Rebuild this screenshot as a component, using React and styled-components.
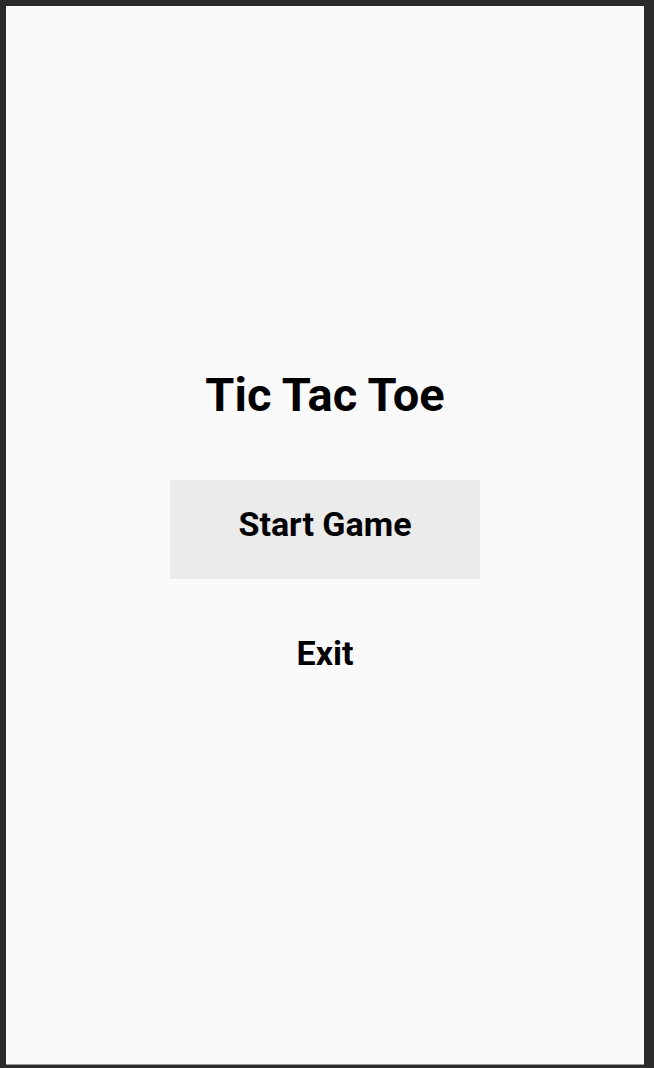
import styled, { createGlobalStyle } from "styled-components"

const GlobalStyle = createGlobalStyle`
    html, body {
        margin: 0;
        padding: 0;
        background-color: #2a2a2a;
    }
`

const Frame = styled.div`
    box-sizing: border-box;
    width: 654px;
    height: 1068px;
    padding: 6px 10px 3px 6px;
    background-color: #2a2a2a;
`

const Screen = styled.div`
    box-sizing: border-box;
    display: flex;
    flex-direction: column;
    align-items: center;
    height: 100%;
    padding-top: 360px;
    background-color: #fafafa;
    border-bottom: 1px solid #9a9a9a;
    font-family: Roboto, "Liberation Sans", sans-serif;
    color: #000;
`

const Title = styled.h1`
    margin: 0;
    font-size: 47px;
    font-weight: 700;
    line-height: 58px;
`

const MenuButton = styled.button`
    box-sizing: border-box;
    width: ${p => p.$width || "auto"};
    height: ${p => p.$height || "auto"};
    margin-top: ${p => p.$top || "0"};
    padding: 0 0 ${p => p.$lift || "0"} 0;
    border: none;
    background-color: ${p => p.$bg || "transparent"};
    font-family: inherit;
    font-size: 34px;
    font-weight: 700;
    color: #000;
    cursor: pointer;
`

export default function App() {
    return (
        <Frame>
            <GlobalStyle />
            <Screen>
                <Title>Tic Tac Toe</Title>
                <MenuButton $width="310px" $height="99px" $top="56px" $bg="#ebebeb" $lift="12px">Start Game</MenuButton>
                <MenuButton $width="310px" $height="50px" $top="49px">Exit</MenuButton>
            </Screen>
        </Frame>
    )
}
